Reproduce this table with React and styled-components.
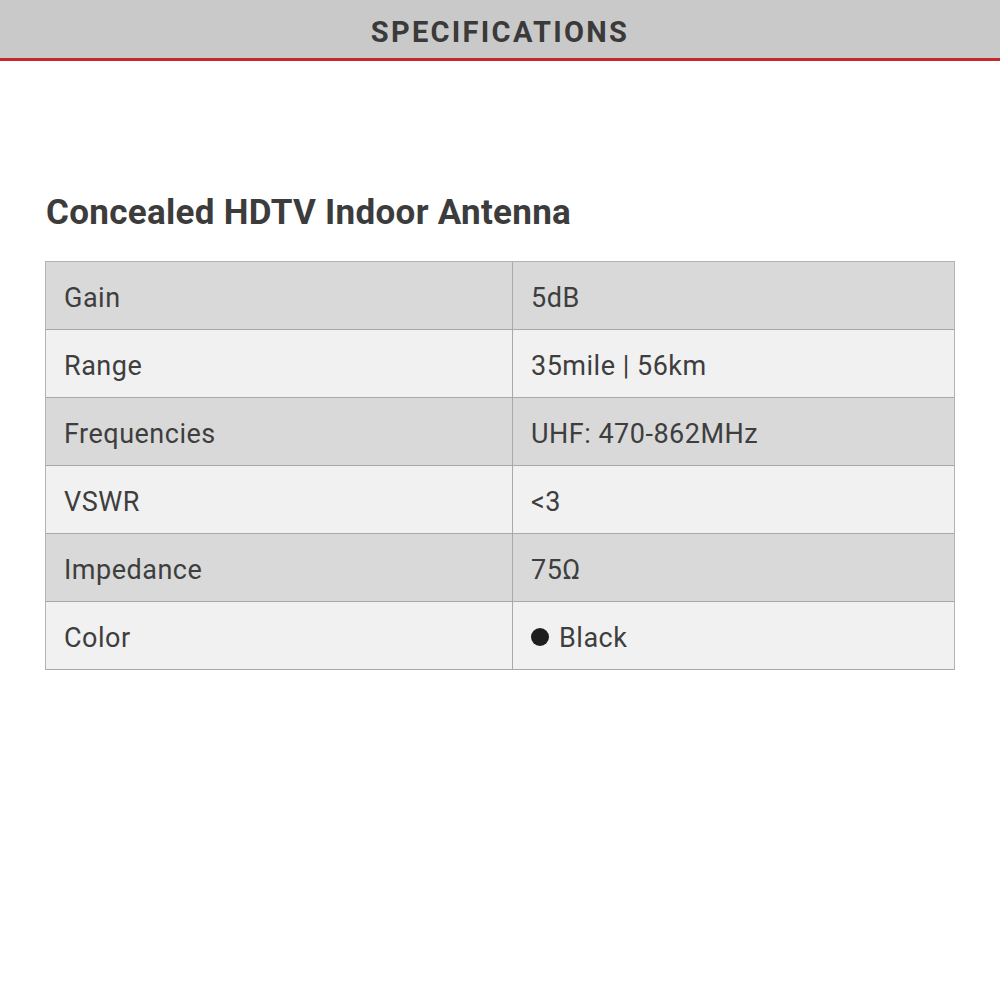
import React from "react";
import styled, { createGlobalStyle } from "styled-components";

const GlobalStyle = createGlobalStyle`
  html, body {
    margin: 0;
    padding: 0;
    background: #fff;
  }
`;

const Page = styled.div`
  width: 1000px;
  height: 1000px;
  background: #fff;
  font-family: Roboto, "Liberation Sans", sans-serif;
`;

const Header = styled.div`
  height: 58px;
  background: #c9c9c9;
  border-bottom: 3px solid #c4282c;
  display: flex;
  align-items: center;
  justify-content: center;
`;

const HeaderTitle = styled.h1`
  margin: 0;
  font-size: 29px;
  font-weight: 700;
  letter-spacing: 2.3px;
  color: #3a3a3a;
  padding-top: 5px;
`;

const Content = styled.div`
  padding: 132px 45px 0 45px;
`;

const Title = styled.h2`
  margin: 0 0 28px 1px;
  font-size: 35px;
  font-weight: 700;
  color: #3c3c3c;
  line-height: 40px;
  letter-spacing: 0.3px;
`;

const Table = styled.div`
  border: 1px solid #b3b3b3;
  border-bottom: none;
  width: 910px;
  box-sizing: border-box;
`;

const Row = styled.div`
  display: grid;
  grid-template-columns: 466px 1fr;
  height: 68px;
  box-sizing: border-box;
  border-bottom: 1px solid #a9a9a9;
  background: ${(p) => (p.$shade ? "#d9d9d9" : "#f1f1f1")};
`;

const Cell = styled.div`
  display: flex;
  align-items: center;
  gap: 10px;
  padding: 5px 18px 0 18px;
  font-size: 27px;
  letter-spacing: 0.5px;
  color: #3e3e3e;
  border-left: ${(p) => (p.$divider ? "1px solid #a9a9a9" : "none")};
`;

const Dot = styled.span`
  width: 18px;
  height: 18px;
  border-radius: 50%;
  background: #1e1e1e;
  display: inline-block;
  margin-bottom: 3px;
`;

const specs = [
  { label: "Gain", value: "5dB" },
  { label: "Range", value: "35mile | 56km" },
  { label: "Frequencies", value: "UHF: 470-862MHz" },
  { label: "VSWR", value: "<3" },
  { label: "Impedance", value: "75Ω" },
  { label: "Color", value: "Black", dot: true },
];

const App = () => (
  <Page>
    <GlobalStyle />
    <Header>
      <HeaderTitle>SPECIFICATIONS</HeaderTitle>
    </Header>
    <Content>
      <Title>Concealed HDTV Indoor Antenna</Title>
      <Table>
        {specs.map((s, i) => (
          <Row key={s.label} $shade={i % 2 === 0}>
            <Cell>{s.label}</Cell>
            <Cell $divider>
              {s.dot && <Dot />}
              {s.value}
            </Cell>
          </Row>
        ))}
      </Table>
    </Content>
  </Page>
);

export default App;
